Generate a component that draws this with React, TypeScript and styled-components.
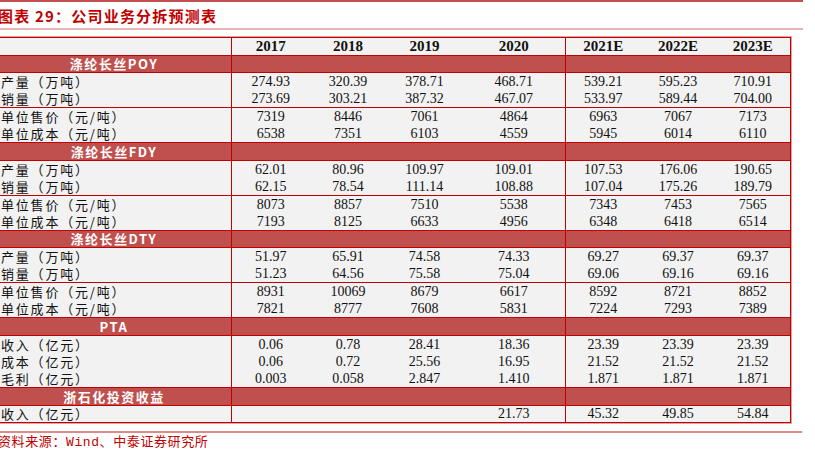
import React from "react";
import styled, { createGlobalStyle } from "styled-components";

const GlobalStyle = createGlobalStyle`
  html, body {
    margin: 0;
    padding: 0;
    background: #ffffff;
  }
`;

const Page = styled.div`
  width: 807px;
  margin-left: -4px;
  font-family: "Liberation Serif", "Noto Sans CJK SC", serif;
`;

const TitleBar = styled.div`
  border-top: 2px solid #c0504d;
  border-bottom: 2px solid #e8b4b4;
  height: 26px;
  display: flex;
  align-items: center;
  padding-left: 2px;
`;

const Title = styled.h1`
  margin: 0;
  font-family: "Noto Sans CJK SC", sans-serif;
  font-size: 15px;
  font-weight: 700;
  letter-spacing: 1.2px;
  color: #c00000;
`;

const Table = styled.table`
  margin-top: 7px;
  width: 794px;
  border-collapse: collapse;
  table-layout: fixed;
  background: #f2f2f2;
  border: 1px solid #c00000;
  box-shadow: 0 0 0 1px #e8a0a0;
`;

const Row = styled.tr<{ $divider?: boolean }>`
  height: 17.5px;
  border-bottom: ${(p) => (p.$divider ? "1px solid #c00000" : "none")};
`;

const HeadRow = styled.tr`
  height: 17.5px;
  border-bottom: 1px solid #c00000;
`;

const SectionRow = styled.tr`
  height: 17.5px;
  background: #c0504d;
  border-top: 1px solid #c00000;
  border-bottom: 1px solid #c00000;
`;

const Label = styled.td`
  padding: 0 0 0 4px;
  border-right: 1px solid #c00000;
  font-family: "Noto Sans CJK SC", sans-serif;
  font-size: 13px;
  letter-spacing: 1.8px;
  line-height: 15px;
  color: #111;
  white-space: nowrap;
  overflow: hidden;
`;

const SectionLabel = styled.td`
  padding: 0;
  border-right: 1px solid #c00000;
  text-align: center;
  font-family: "Noto Sans CJK SC", sans-serif;
  font-size: 13px;
  font-weight: 700;
  letter-spacing: 1.5px;
  line-height: 15px;
  color: #ffffff;
`;

const Cell = styled.td<{ $groupEnd?: boolean }>`
  padding: 0;
  text-align: center;
  font-size: 14px;
  line-height: 15px;
  color: #111;
  border-right: ${(p) => (p.$groupEnd ? "1px solid #c00000" : "none")};
`;

const HeadCell = styled(Cell)`
  font-weight: 700;
  font-size: 15px;
`;

const Footer = styled.div`
  margin-top: 8px;
  border-top: 2px solid #dd8a8a;
  width: 804px;
  padding: 1px 0 0 2px;
  font-family: "Liberation Mono", "Noto Sans CJK SC", monospace;
  font-size: 13px;
  line-height: 18px;
  letter-spacing: 0.6px;
  color: #c00000;
`;

type Line = { label: string; values: string[]; divider?: boolean };
type Section = { title: string; lines: Line[] };

const years = ["2017", "2018", "2019", "2020", "2021E", "2022E", "2023E"];
const widths = [235, 78, 77, 76, 103, 75, 75, 75];

const sections: Section[] = [
  {
    title: "涤纶长丝POY",
    lines: [
      { label: "产量（万吨）", values: ["274.93", "320.39", "378.71", "468.71", "539.21", "595.23", "710.91"] },
      { label: "销量（万吨）", values: ["273.69", "303.21", "387.32", "467.07", "533.97", "589.44", "704.00"], divider: true },
      { label: "单位售价（元/吨）", values: ["7319", "8446", "7061", "4864", "6963", "7067", "7173"] },
      { label: "单位成本（元/吨）", values: ["6538", "7351", "6103", "4559", "5945", "6014", "6110"] },
    ],
  },
  {
    title: "涤纶长丝FDY",
    lines: [
      { label: "产量（万吨）", values: ["62.01", "80.96", "109.97", "109.01", "107.53", "176.06", "190.65"] },
      { label: "销量（万吨）", values: ["62.15", "78.54", "111.14", "108.88", "107.04", "175.26", "189.79"], divider: true },
      { label: "单位售价（元/吨）", values: ["8073", "8857", "7510", "5538", "7343", "7453", "7565"] },
      { label: "单位成本（元/吨）", values: ["7193", "8125", "6633", "4956", "6348", "6418", "6514"] },
    ],
  },
  {
    title: "涤纶长丝DTY",
    lines: [
      { label: "产量（万吨）", values: ["51.97", "65.91", "74.58", "74.33", "69.27", "69.37", "69.37"] },
      { label: "销量（万吨）", values: ["51.23", "64.56", "75.58", "75.04", "69.06", "69.16", "69.16"], divider: true },
      { label: "单位售价（元/吨）", values: ["8931", "10069", "8679", "6617", "8592", "8721", "8852"] },
      { label: "单位成本（元/吨）", values: ["7821", "8777", "7608", "5831", "7224", "7293", "7389"] },
    ],
  },
  {
    title: "PTA",
    lines: [
      { label: "收入（亿元）", values: ["0.06", "0.78", "28.41", "18.36", "23.39", "23.39", "23.39"] },
      { label: "成本（亿元）", values: ["0.06", "0.72", "25.56", "16.95", "21.52", "21.52", "21.52"] },
      { label: "毛利（亿元）", values: ["0.003", "0.058", "2.847", "1.410", "1.871", "1.871", "1.871"] },
    ],
  },
  {
    title: "浙石化投资收益",
    lines: [{ label: "收入（亿元）", values: ["", "", "", "21.73", "45.32", "49.85", "54.84"] }],
  },
];

const App: React.FC = () => {
  return (
    <Page>
      <GlobalStyle />
      <TitleBar>
        <Title>图表 29：公司业务分拆预测表</Title>
      </TitleBar>
      <Table>
        <colgroup>
          {widths.map((w, i) => (
            <col key={i} style={{ width: w }} />
          ))}
        </colgroup>
        <tbody>
          <HeadRow>
            <Label />
            {years.map((y, i) => (
              <HeadCell key={y} $groupEnd={i === 3}>
                {y}
              </HeadCell>
            ))}
          </HeadRow>
          {sections.map((s) => (
            <React.Fragment key={s.title}>
              <SectionRow>
                <SectionLabel>{s.title}</SectionLabel>
                {years.map((y, i) => (
                  <Cell key={y} $groupEnd={i === 3} />
                ))}
              </SectionRow>
              {s.lines.map((l) => (
                <Row key={l.label} $divider={l.divider}>
                  <Label>{l.label}</Label>
                  {l.values.map((v, i) => (
                    <Cell key={i} $groupEnd={i === 3}>
                      {v}
                    </Cell>
                  ))}
                </Row>
              ))}
            </React.Fragment>
          ))}
        </tbody>
      </Table>
      <Footer>资料来源：Wind、中泰证券研究所</Footer>
    </Page>
  );
};

export default App;
